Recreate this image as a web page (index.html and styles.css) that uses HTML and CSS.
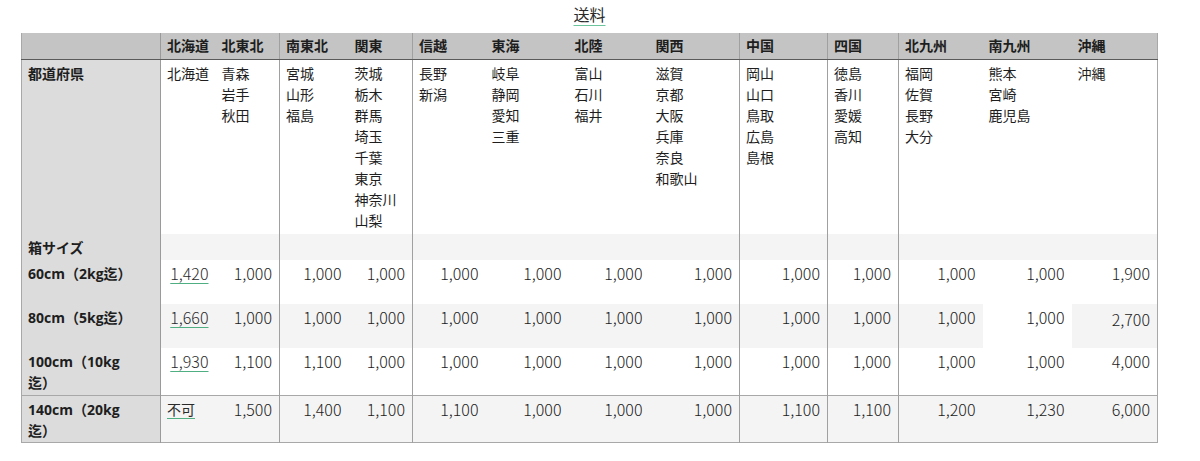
FILE: index.html
```html
<!DOCTYPE html>
<html lang="ja">
<head>
<meta charset="utf-8">
<title>送料</title>
<link rel="stylesheet" href="styles.css">
</head>
<body>
<div class="page">
  <div class="title"><a href="#">送料</a></div>
  <table class="rates">
    <colgroup>
      <col class="c-label">
      <col class="c55"><col class="c64"><col class="c69"><col class="c64">
      <col class="c73"><col class="c83"><col class="c81"><col class="c90">
      <col class="c88"><col class="c71"><col class="c84"><col class="c89"><col class="c86">
    </colgroup>
    <thead>
      <tr class="r-head">
        <th class="label"></th>
        <th>北海道</th><th class="br">北東北</th>
        <th>南東北</th><th class="br">関東</th>
        <th>信越</th><th>東海</th><th>北陸</th><th class="br">関西</th>
        <th class="br">中国</th>
        <th class="br">四国</th>
        <th>北九州</th><th>南九州</th><th>沖縄</th>
      </tr>
    </thead>
    <tbody>
      <tr class="r-pref">
        <th class="label">都道府県</th>
        <td>北海道</td>
        <td class="br">青森<br>岩手<br>秋田</td>
        <td>宮城<br>山形<br>福島</td>
        <td class="br">茨城<br>栃木<br>群馬<br>埼玉<br>千葉<br>東京<br>神奈川<br>山梨</td>
        <td>長野<br>新潟</td>
        <td>岐阜<br>静岡<br>愛知<br>三重</td>
        <td>富山<br>石川<br>福井</td>
        <td class="br">滋賀<br>京都<br>大阪<br>兵庫<br>奈良<br>和歌山</td>
        <td class="br">岡山<br>山口<br>鳥取<br>広島<br>島根</td>
        <td class="br">徳島<br>香川<br>愛媛<br>高知</td>
        <td>福岡<br>佐賀<br>長野<br>大分</td>
        <td>熊本<br>宮崎<br>鹿児島</td>
        <td>沖縄</td>
      </tr>
      <tr class="r-box shade">
        <th class="label">箱サイズ</th>
        <td></td><td class="br"></td><td></td><td class="br"></td>
        <td></td><td></td><td></td><td class="br"></td>
        <td class="br"></td><td class="br"></td>
        <td></td><td></td><td></td>
      </tr>
      <tr class="r-one">
        <th class="label">60cm（2kg迄）</th>
        <td class="num"><a href="#">1,420</a></td><td class="num br">1,000</td>
        <td class="num">1,000</td><td class="num br">1,000</td>
        <td class="num">1,000</td><td class="num">1,000</td><td class="num">1,000</td><td class="num br">1,000</td>
        <td class="num br">1,000</td><td class="num br">1,000</td>
        <td class="num">1,000</td><td class="num">1,000</td><td class="num">1,900</td>
      </tr>
      <tr class="r-one shade">
        <th class="label">80cm（5kg迄）</th>
        <td class="num"><a href="#">1,660</a></td><td class="num br">1,000</td>
        <td class="num">1,000</td><td class="num br">1,000</td>
        <td class="num">1,000</td><td class="num">1,000</td><td class="num">1,000</td><td class="num br">1,000</td>
        <td class="num br">1,000</td><td class="num br">1,000</td>
        <td class="num">1,000</td><td class="num plain">1,000</td><td class="num low">2,700</td>
      </tr>
      <tr class="r-two">
        <th class="label">100cm（10kg迄）</th>
        <td class="num"><a href="#">1,930</a></td><td class="num br">1,100</td>
        <td class="num">1,100</td><td class="num br">1,000</td>
        <td class="num">1,000</td><td class="num">1,000</td><td class="num">1,000</td><td class="num br">1,000</td>
        <td class="num br">1,000</td><td class="num br">1,000</td>
        <td class="num">1,000</td><td class="num">1,000</td><td class="num">4,000</td>
      </tr>
      <tr class="r-two shade top-line">
        <th class="label">140cm（20kg迄）</th>
        <td><a href="#">不可</a></td><td class="num br">1,500</td>
        <td class="num">1,400</td><td class="num br">1,100</td>
        <td class="num">1,100</td><td class="num">1,000</td><td class="num">1,000</td><td class="num br">1,000</td>
        <td class="num br">1,100</td><td class="num br">1,100</td>
        <td class="num">1,200</td><td class="num">1,230</td><td class="num">6,000</td>
      </tr>
    </tbody>
  </table>
</div>
</body>
</html>
```

FILE: styles.css
```css
html, body {
  margin: 0;
  padding: 0;
  background: #ffffff;
}

body {
  font-family: "Noto Sans CJK JP", "Noto Sans", sans-serif;
  color: #1e1e1e;
}

.page {
  width: 1137px;
  margin-left: 21px;
}

.title {
  height: 33px;
  box-sizing: border-box;
  padding-top: 3px;
  text-align: center;
  font-size: 16px;
  line-height: 22px;
}

.title a {
  color: #2a2a2a;
  text-decoration: underline;
  text-decoration-color: #6cc59c;
  text-underline-offset: 4px;
}

.rates {
  width: 1137px;
  table-layout: fixed;
  border-collapse: collapse;
  font-size: 14px;
  line-height: 21px;
  border-left: 1px solid #a8a8a8;
  border-right: 1px solid #a8a8a8;
  border-bottom: 1px solid #a8a8a8;
}

.c-label { width: 139px; }
.c55 { width: 55px; }
.c64 { width: 64px; }
.c69 { width: 69px; }
.c73 { width: 73px; }
.c83 { width: 83px; }
.c81 { width: 81px; }
.c90 { width: 90px; }
.c88 { width: 88px; }
.c71 { width: 71px; }
.c84 { width: 84px; }
.c89 { width: 89px; }
.c86 { width: 86px; }

.rates th,
.rates td {
  padding: 3px 6px 0 6px;
  vertical-align: top;
  text-align: left;
  font-weight: normal;
  white-space: nowrap;
  overflow: visible;
}

.rates .br {
  border-right: 1px solid #a0a0a0;
}

.rates thead th {
  background: #c3c4c3;
  font-weight: bold;
  border-bottom: 1px solid #5a5a5a;
  padding-top: 2px;
}

.rates th.label {
  background: #dcdcdc;
  font-family: "Open Sans", "Noto Sans CJK JP", sans-serif;
  font-weight: bold;
  padding-right: 20px;
  white-space: normal;
  border-right: 1px solid #9a9a9a;
}

.rates thead th.label {
  background: #c3c4c3;
}

.r-head { height: 26px; }
.r-pref { height: 175px; }
.r-box { height: 26px; }
.r-one { height: 44px; }
.r-two { height: 47px; }

.shade td {
  background: #f4f4f4;
}

.shade td.plain {
  background: #ffffff;
}

.top-line th,
.top-line td {
  border-top: 1px solid #a8a8a8;
}

.rates td.num {
  text-align: right;
  padding-right: 7px;
  font-size: 16px;
  font-weight: 300;
  color: #222;
}

.rates td.low {
  padding-top: 5px;
}

.rates td a {
  color: #2a2a2a;
  text-decoration: underline;
  text-decoration-color: #4fae82;
  text-underline-offset: 3px;
}
```
